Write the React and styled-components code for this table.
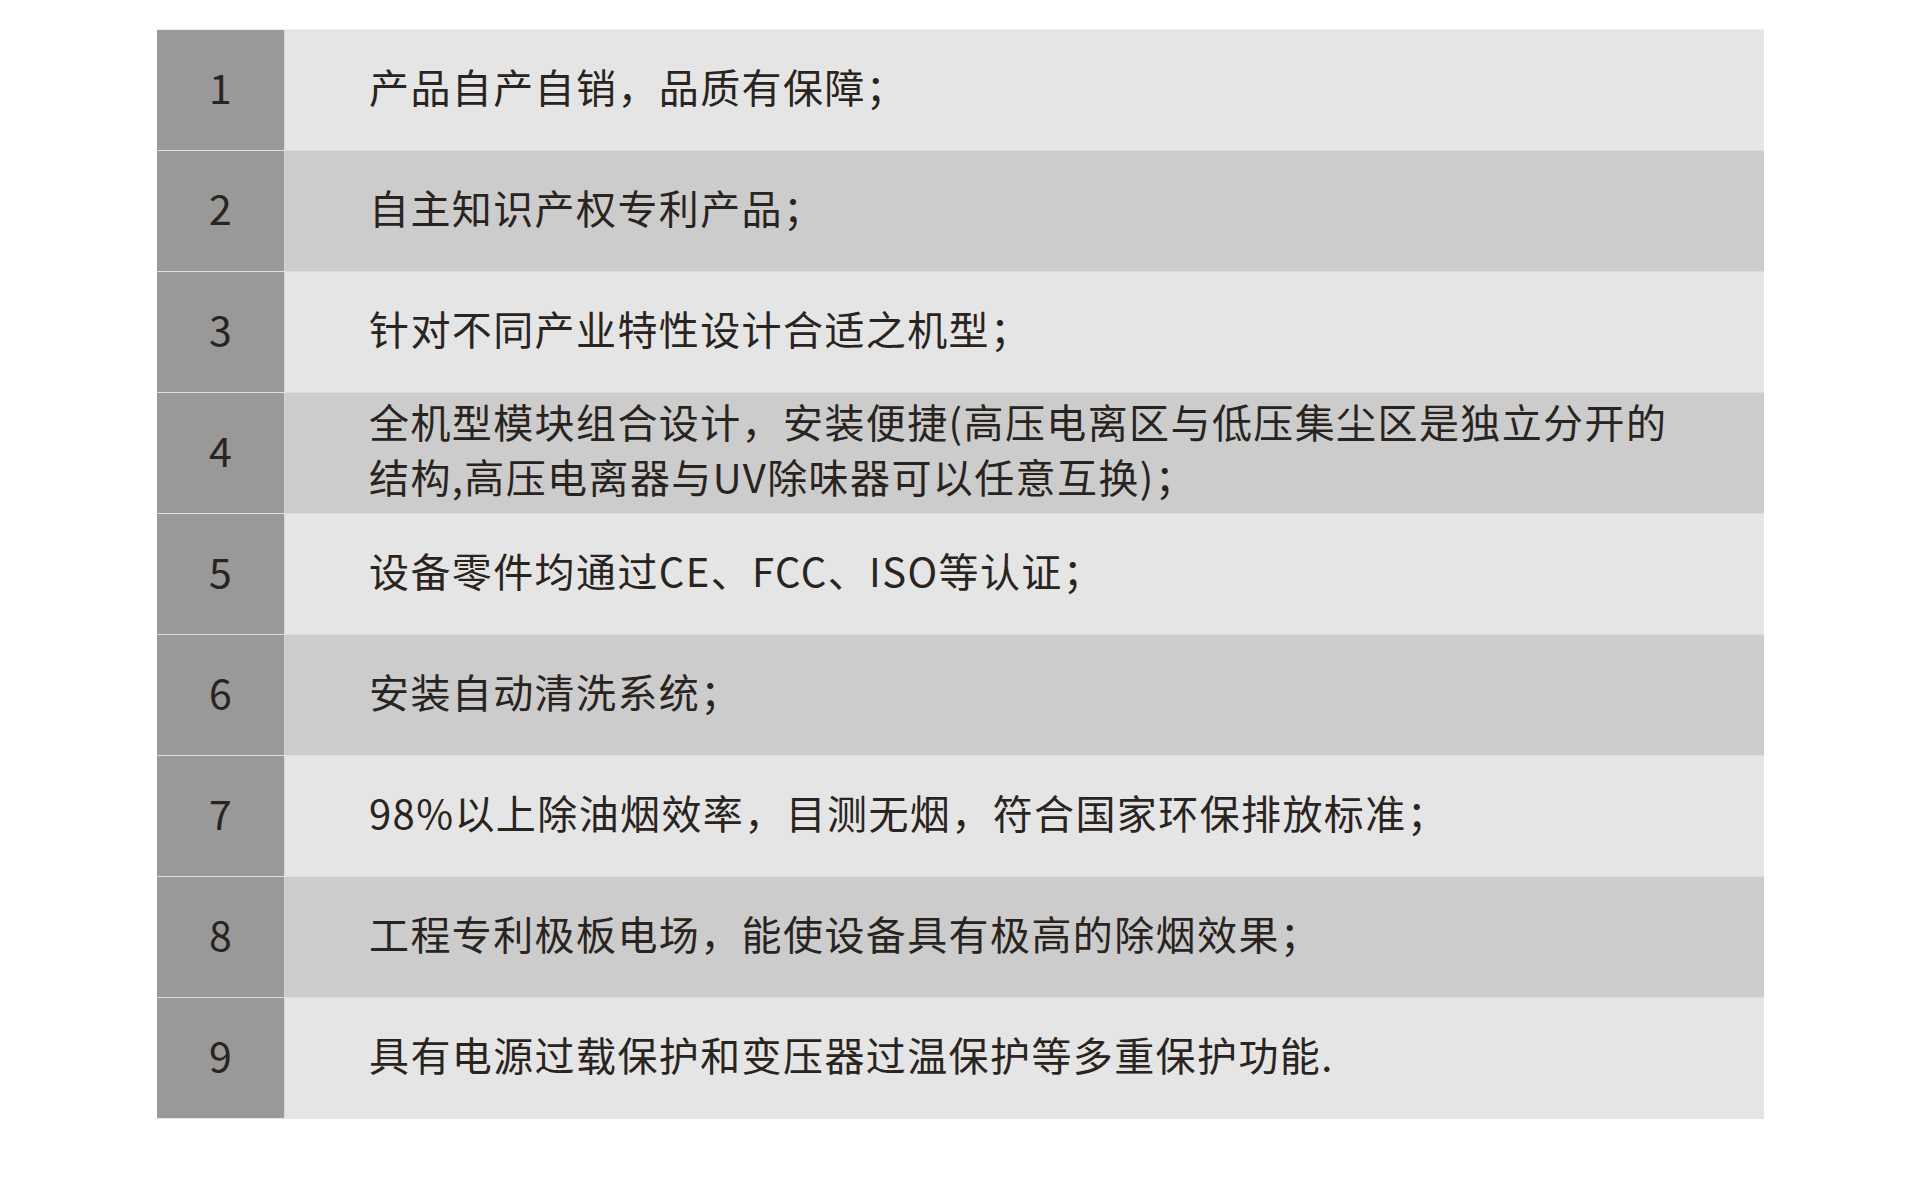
import React from "react";
import styled, { createGlobalStyle } from "styled-components";

const GlobalStyle = createGlobalStyle`
  body {
    margin: 0;
    background: #ffffff;
    font-family: "Noto Sans CJK SC", "Noto Sans", sans-serif;
  }
`;

const Page = styled.main`
  padding: 29px 0 86px 157px;
`;

const Table = styled.section`
  width: 1607px;
  display: flex;
  flex-direction: column;
  border-top: 1px solid #eeeeee;
`;

const Row = styled.div`
  display: grid;
  grid-template-columns: 128px 1fr;
  height: 120px;
  border-bottom: 1px solid ${(p) => (p.$last ? "#e5e5e5" : "#dcdcdc")};
`;

const Num = styled.div`
  display: flex;
  align-items: center;
  justify-content: center;
  padding-bottom: 8px;
  background: #999999;
  border-right: 1px solid #d6d6d6;
  color: #2a2421;
  font-size: 41px;
  font-weight: 400;
`;

const Text = styled.p`
  margin: 0;
  display: flex;
  align-items: center;
  padding: 0 70px 8px 84px;
  background: ${(p) => (p.$dark ? "#cccccc" : "#e5e5e5")};
  color: #2a2421;
  font-size: 40px;
  font-weight: 400;
  letter-spacing: 1.4px;
  line-height: 55px;
`;

const items = [
  "产品自产自销，品质有保障；",
  "自主知识产权专利产品；",
  "针对不同产业特性设计合适之机型；",
  "全机型模块组合设计，安装便捷(高压电离区与低压集尘区是独立分开的结构,高压电离器与UV除味器可以任意互换)；",
  "设备零件均通过CE、FCC、ISO等认证；",
  "安装自动清洗系统；",
  "98%以上除油烟效率，目测无烟，符合国家环保排放标准；",
  "工程专利极板电场，能使设备具有极高的除烟效果；",
  "具有电源过载保护和变压器过温保护等多重保护功能.",
];

const App = () => {
  return (
    <>
      <GlobalStyle />
      <Page>
        <Table>
          {items.map((t, i) => (
            <Row key={i} $last={i === items.length - 1}>
              <Num>{i + 1}</Num>
              <Text $dark={i % 2 === 1}>{t}</Text>
            </Row>
          ))}
        </Table>
      </Page>
    </>
  );
};

export default App;
